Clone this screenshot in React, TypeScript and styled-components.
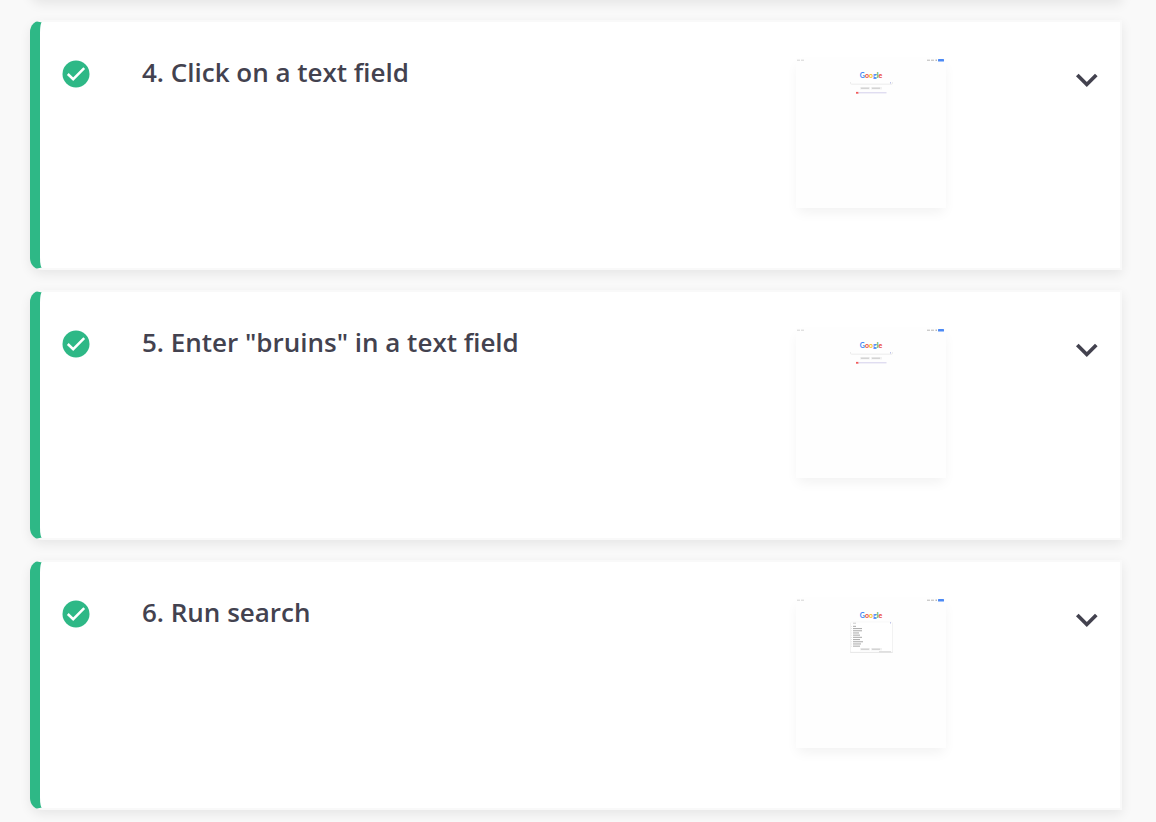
import React from "react";
import styled, { createGlobalStyle } from "styled-components";

const GlobalStyle = createGlobalStyle`
  * {
    box-sizing: border-box;
  }
  body {
    margin: 0;
    background: #f9f9f9;
    color: #43424f;
    font-family: "Open Sans", "Noto Sans", sans-serif;
  }
`;

const Page = styled.main`
  overflow: hidden;
  padding: 0 34px 12px 30px;
`;

const StepList = styled.ol`
  display: flex;
  flex-direction: column;
  gap: 20px;
  margin: 0;
  padding: 0;
  list-style: none;
`;

const StepCard = styled.li<{ $tucked?: boolean }>`
  display: flex;
  align-items: flex-start;
  height: ${(p) => (p.$tucked ? "60px" : "250px")};
  margin-top: ${(p) => (p.$tucked ? "-60px" : "0")};
  padding: 36px 20px 0;
  border: 2px solid #f9f9f9;
  border-left: 10px solid #2eb886;
  border-radius: 12px 0 0 12px;
  background: #ffffff;
  background-clip: padding-box;
  box-shadow: 0 4px 12px rgba(0, 0, 0, 0.08);
`;

const Status = styled.span`
  flex: none;
  width: 32px;
  padding: 2px;
  line-height: 0;
`;

const Title = styled.h2`
  flex: 1;
  margin: -4px 20px 0 50px;
  font-size: 26px;
  font-weight: 600;
  line-height: 36px;
`;

const Shot = styled.figure`
  flex: none;
  width: 150px;
  height: 150px;
  margin: 0 128px 0 0;
  background: #fefefe;
  box-shadow: 0 6px 12px -2px rgba(0, 0, 0, 0.06);
`;

const Toggle = styled.button`
  flex: none;
  display: flex;
  width: 26px;
  height: 26px;
  margin-top: 10px;
  padding: 0;
  border: 0;
  background: none;
  color: inherit;
  cursor: pointer;
`;

const CheckIcon = () => (
  <svg width="28" height="28" viewBox="0 0 28 28" role="img" aria-label="Passed">
    <circle cx="14" cy="14" r="13.5" fill="#2eb886" />
    <path d="M5.8 14l5.4 5.2L22.2 8.2" fill="none" stroke="#fff" strokeWidth="2.5" />
  </svg>
);

const ChevronIcon = () => (
  <svg width="26" height="26" viewBox="0 0 26 26" aria-hidden="true">
    <path d="M3.3 7l9.5 9.5 9.5-9.5" fill="none" stroke="currentColor" strokeWidth="3.7" />
  </svg>
);

const suggestionWidths = [3, 9, 9, 6, 7, 9, 7, 10, 8, 7];

const BrowserShot = ({ searching }: { searching: boolean }) => {
  const buttonsY = searching ? 50 : 29;
  return (
    <svg width="150" height="150" viewBox="0 0 150 150" role="img" aria-label="Screenshot of the step">
      <rect x="1" y="1.7" width="3" height="1" fill="#d4d4d4" />
      <rect x="5" y="1.7" width="3" height="1" fill="#d4d4d4" />
      <rect x="131" y="1.7" width="3" height="1" fill="#b8b8b8" />
      <rect x="135" y="1.7" width="3" height="1" fill="#b8b8b8" />
      <rect x="139.5" y="1.5" width="1.5" height="1.5" fill="#b8b8b8" />
      <rect x="142" y="1" width="6" height="2.6" rx="0.5" fill="#4c8af5" />
      <text x="75" y="20" textAnchor="middle" fontFamily="Lato, sans-serif" fontSize="7" fontWeight="700">
        <tspan fill="#4285f4">G</tspan>
        <tspan fill="#ea4335">o</tspan>
        <tspan fill="#fbbc05">o</tspan>
        <tspan fill="#4285f4">g</tspan>
        <tspan fill="#34a853">l</tspan>
        <tspan fill="#ea4335">e</tspan>
      </text>
      {searching ? (
        <>
          <rect x="54" y="25" width="43" height="30" rx="1" fill="#e6e6e6" />
          <rect x="54.5" y="24" width="42" height="30" rx="1" fill="#ffffff" stroke="#f1f1f1" strokeWidth="0.5" />
          <rect x="57" y="24.7" width="3" height="1" fill="#cccccc" />
          {suggestionWidths.map((w, i) => (
            <g key={i}>
              <rect x="55" y={28 + i * 2.2} width="1" height="0.8" fill="#e4e4e4" />
              <rect x="57" y={27.8 + i * 2.2} width={w} height="1.1" fill="#b0b0b0" />
            </g>
          ))}
          <rect x="83" y="53.4" width="12" height="0.8" fill="#cccccc" />
        </>
      ) : (
        <>
          <path d="M54.5 24v1.2q0 1 1 1h40q1 0 1-1V24" fill="none" stroke="#ececec" strokeWidth="1" />
          <rect x="60" y="33.9" width="2.5" height="1.8" fill="#f25b5b" />
          <rect x="62.5" y="34.3" width="28" height="1" fill="#d3cfec" />
        </>
      )}
      <rect x="94" y="24" width="1" height="1.6" fill="#c0c5ea" />
      <rect x="64" y={buttonsY} width="10" height="2.4" fill="#f1f1f1" />
      <rect x="75" y={buttonsY} width="11" height="2.4" fill="#f1f1f1" />
      <rect x="65" y={buttonsY + 0.7} width="8" height="1" fill="#c8c8c8" />
      <rect x="76" y={buttonsY + 0.7} width="8" height="1" fill="#c8c8c8" />
    </svg>
  );
};

const steps = [
  { title: "4. Click on a text field", searching: false },
  { title: '5. Enter "bruins" in a text field', searching: false },
  { title: "6. Run search", searching: true },
];

export default function App() {
  return (
    <>
      <GlobalStyle />
      <Page>
        <StepList>
          <StepCard $tucked aria-hidden="true" />
          {steps.map((step) => (
            <StepCard key={step.title}>
              <Status>
                <CheckIcon />
              </Status>
              <Title>{step.title}</Title>
              <Shot>
                <BrowserShot searching={step.searching} />
              </Shot>
              <Toggle type="button" aria-label={`Expand ${step.title}`}>
                <ChevronIcon />
              </Toggle>
            </StepCard>
          ))}
        </StepList>
      </Page>
    </>
  );
}
